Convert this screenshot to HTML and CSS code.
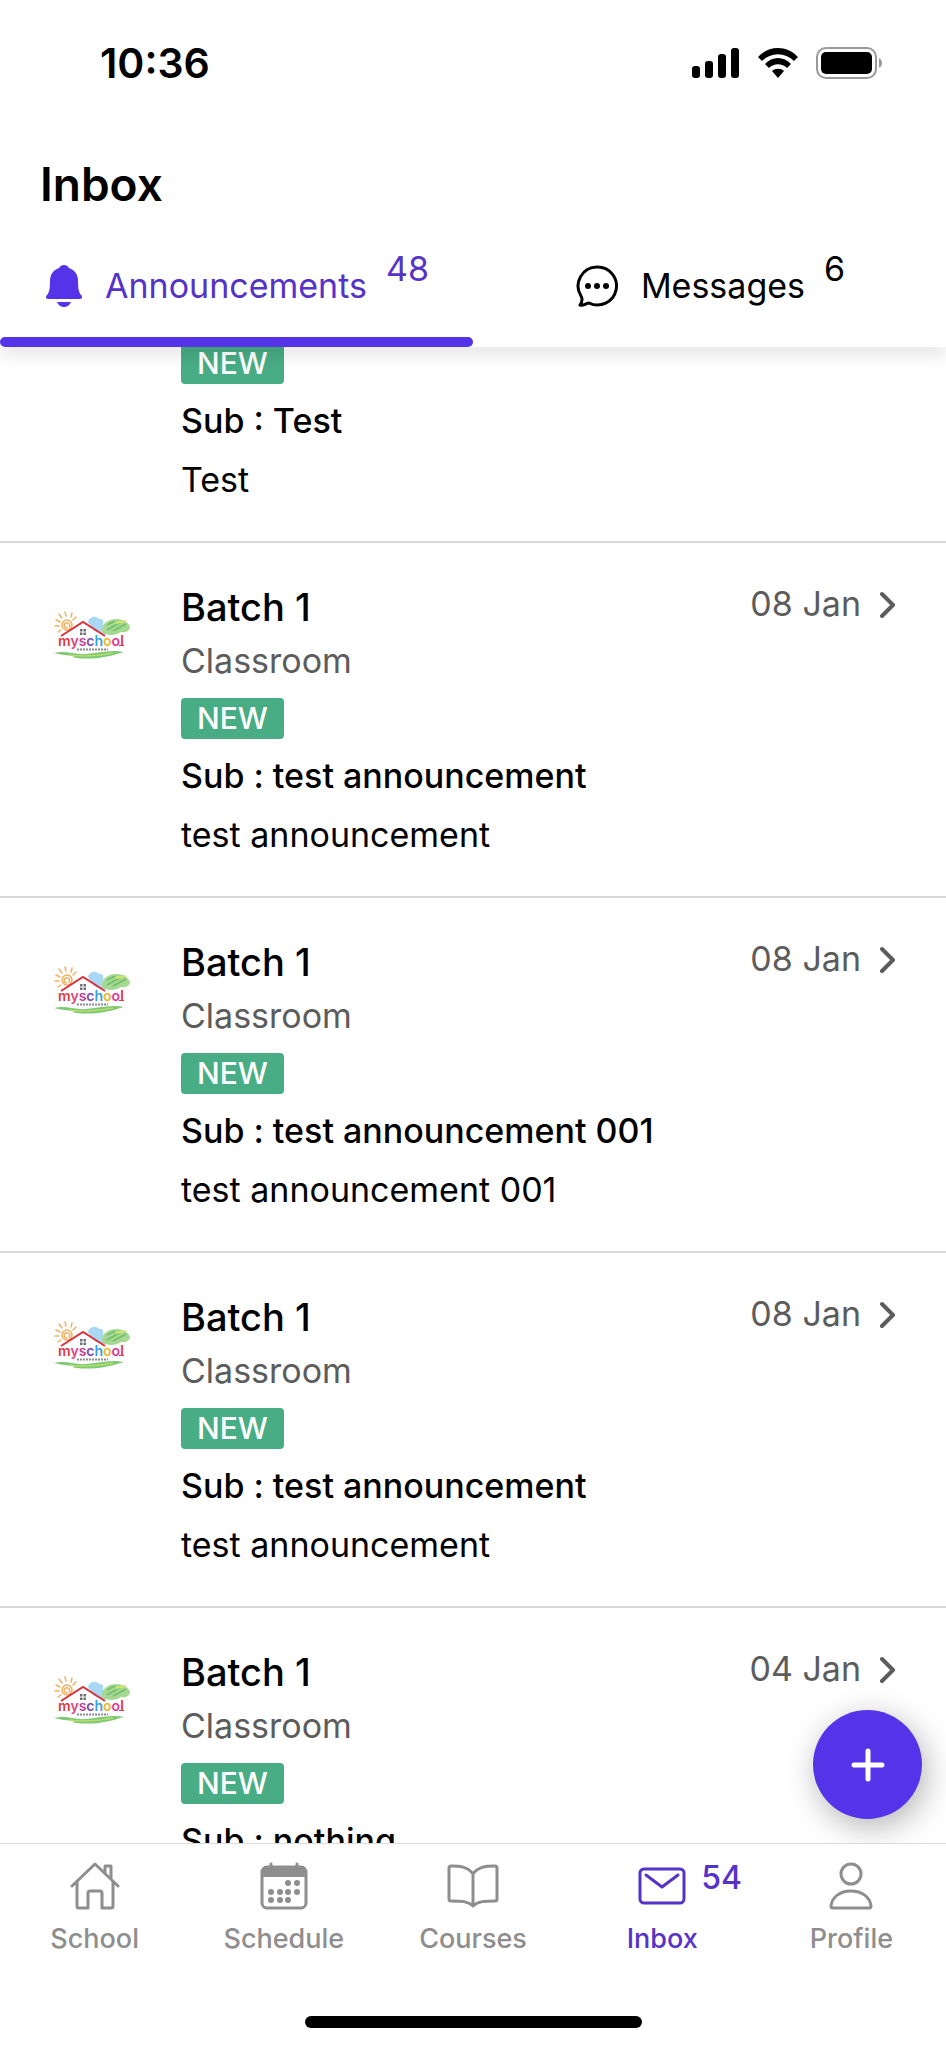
FILE: index.html
```html
<!DOCTYPE html>
<html lang="en">
<head>
    <meta charset="UTF-8">
    <meta name="viewport" content="width=device-width, initial-scale=1.0">
    <title>Inbox</title>
    <link rel="stylesheet" href="styles.css">
</head>
<body>

    <!-- shared drawings -->
    <svg class="defs" aria-hidden="true">
        <symbol id="logo" viewBox="0 0 80 52">
            <g fill="none" stroke="#f2b062" stroke-width="1.5" stroke-linecap="round">
                <circle cx="14" cy="14" r="5"/>
                <path d="M14 17c-3 0-4-4-1-5s5 3 3 4M6 3l3 4M12 1l1 4M19 2l-1 4M3 9l4 2M2 15h4M5 21l3-2M23 6l-3 3"/>
            </g>
            <path d="M35 11c1-5 8-7 11-3 4-1 5 3 4 7l3 9-12-4z" fill="#a9d8f5"/>
            <path d="M49 18c1-7 8-10 15-10 6 0 12 4 13 8 0 4-5 6-9 5-4 3-11 4-15 2-3 0-4-2-4-5z" fill="#a5d992"/>
            <path d="M54 19l14-8M60 20l13-7M54 14l8-4" stroke="#6fbe6c" stroke-width="1.5" fill="none"/>
            <path d="M63 12l10-2" stroke="#d5e56c" stroke-width="2"/>
            <path d="M8 25L30 11l22 14" fill="none" stroke="#d9333c" stroke-width="2"/>
            <path d="M27 18h6v6h-6z" fill="#6d7076"/>
            <path d="M30 18v6M27 21h6" stroke="#fff" stroke-width="1"/>
            <text x="5" y="35" class="logo-text"><tspan fill="#e03a3e">m</tspan><tspan fill="#e5447c">y</tspan><tspan fill="#c23a9a">s</tspan><tspan fill="#7c4bb0">c</tspan><tspan fill="#2fa4dc">h</tspan><tspan fill="#f5b32c">o</tspan><tspan fill="#e0389a">o</tspan><tspan fill="#e03a3e">l</tspan></text>
            <path d="M66 34.500h5" stroke="#e03a3e" stroke-width="1"/>
            <path d="M24 38.500h31" stroke="#8a8c90" stroke-width="2" stroke-dasharray="2 1"/>
            <path d="M1 42c12-3 20 2 32 1s26-5 38-2c-8 2-12 4-20 5-10 2-24 2-32 0 3-1 4-1 5-2-8 1-15 0-23-2z" fill="#7cc874"/>
            <path d="M16 44c14 2 28 1 44-2" stroke="#b9dd6b" stroke-width="1.500" fill="none"/>
        </symbol>
        <symbol id="chevron" viewBox="0 0 16 28">
            <path d="M2 3l11 11L2 25" fill="none" stroke="currentColor" stroke-width="4" stroke-linecap="round" stroke-linejoin="round"/>
        </symbol>
    </svg>

    <header class="header">
        <div class="status-bar">
            <span class="time">10:36</span>
            <div class="status-icons">
                <svg width="48" height="30" viewBox="0 0 48 30">
                    <rect x="0" y="18" width="8" height="12" rx="3"/>
                    <rect x="13" y="13" width="8" height="17" rx="3"/>
                    <rect x="26" y="6" width="8" height="24" rx="3"/>
                    <rect x="39" y="0" width="8" height="30" rx="3"/>
                </svg>
                <svg width="40" height="30" viewBox="0 0 40 30">
                    <path d="M0 9C11-3 29-3 40 9l-4 4C27 4 13 4 4 13z"/>
                    <path d="M7 16c7-8 19-8 26 0l-4 4c-5-5-13-5-18 0z"/>
                    <path d="M14 23c3-3 9-3 12 0l-6 7z"/>
                </svg>
                <svg width="68" height="32" viewBox="0 0 68 32">
                    <rect x="1" y="1" width="59" height="30" rx="9" fill="none" stroke="#999" stroke-width="2"/>
                    <rect x="5" y="5" width="51" height="22" rx="5"/>
                    <path d="M63 11c4 2 4 8 0 10z" fill="#999"/>
                </svg>
            </div>
        </div>

        <h1>Inbox</h1>

        <nav class="tabs">
            <a class="tab active" href="#announcements">
                <svg width="36" height="42" viewBox="0 0 36 42">
                    <path fill="currentColor" d="M18 0c2 0 4 1 5 3 6 2 9 7 9 13 0 8 1 12 3 14 1 1 1 1 1 2 0 1-1 2-2 2H2c-1 0-2-1-2-2s0-1 1-2c2-2 3-6 3-14 0-6 3-11 9-13 1-2 3-3 5-3zM11 37h14c-1 3-4 5-7 5s-6-2-7-5z"/>
                </svg>
                <span class="tab-label">Announcements</span>
                <span class="tab-count">48</span>
            </a>
            <a class="tab" href="#messages">
                <svg width="42" height="42" viewBox="0 0 42 42">
                    <path fill="none" stroke="currentColor" stroke-width="3" stroke-linejoin="round" d="M21 2a19 19 0 1 1-8 36c-3 0-5 3-9 2 2-3 3-6 1-9A19 19 0 0 1 21 2z"/>
                    <circle cx="12" cy="21" r="3" fill="currentColor"/>
                    <circle cx="21" cy="21" r="3" fill="currentColor"/>
                    <circle cx="30" cy="21" r="3" fill="currentColor"/>
                </svg>
                <span class="tab-label">Messages</span>
                <span class="tab-count">6</span>
            </a>
        </nav>
    </header>

    <main class="list" id="announcements">
        <article class="item continued">
            <div class="content">
                <span class="badge">NEW</span>
                <p class="subject">Sub : Test</p>
                <p class="message">Test</p>
            </div>
        </article>
        <article class="item">
            <svg class="logo"><use href="#logo"/></svg>
            <div class="content">
                <h2>Batch 1</h2>
                <p class="group">Classroom</p>
                <span class="badge">NEW</span>
                <p class="subject">Sub : test announcement</p>
                <p class="message">test announcement</p>
            </div>
            <a class="date" href="#">08 Jan <svg class="chevron"><use href="#chevron"/></svg></a>
        </article>
        <article class="item">
            <svg class="logo"><use href="#logo"/></svg>
            <div class="content">
                <h2>Batch 1</h2>
                <p class="group">Classroom</p>
                <span class="badge">NEW</span>
                <p class="subject">Sub : test announcement 001</p>
                <p class="message">test announcement 001</p>
            </div>
            <a class="date" href="#">08 Jan <svg class="chevron"><use href="#chevron"/></svg></a>
        </article>
        <article class="item">
            <svg class="logo"><use href="#logo"/></svg>
            <div class="content">
                <h2>Batch 1</h2>
                <p class="group">Classroom</p>
                <span class="badge">NEW</span>
                <p class="subject">Sub : test announcement</p>
                <p class="message">test announcement</p>
            </div>
            <a class="date" href="#">08 Jan <svg class="chevron"><use href="#chevron"/></svg></a>
        </article>
        <article class="item">
            <svg class="logo"><use href="#logo"/></svg>
            <div class="content">
                <h2>Batch 1</h2>
                <p class="group">Classroom</p>
                <span class="badge">NEW</span>
                <p class="subject">Sub : nothing</p>
            </div>
            <a class="date" href="#">04 Jan <svg class="chevron"><use href="#chevron"/></svg></a>
        </article>
    </main>

    <footer class="footer">
        <button class="add" type="button" aria-label="New announcement">
            <svg width="34" height="34" viewBox="0 0 34 34">
                <path d="M17 3v28M3 17h28" stroke="#fff" stroke-width="5" stroke-linecap="round"/>
            </svg>
        </button>
        <nav class="bottom-nav">
            <a href="#school">
                <svg width="50" height="48" viewBox="0 0 50 48">
                    <path d="M2 24L25 2l23 22M7 20v24q0 2 2 2h9V31q0-2 2-2h10q2 0 2 2v15h9q2 0 2-2V20M35 11V4h6v13"/>
                </svg>
                <span>School</span>
            </a>
            <a href="#schedule">
                <svg width="48" height="48" viewBox="0 0 48 48">
                    <rect x="2" y="5" width="44" height="41" rx="5"/>
                    <path d="M11 2v5M37 2v5"/>
                    <path class="solid" d="M2 15V9q0-5 5-5h34q5 0 5 5v6z"/>
                    <g class="solid">
                        <circle cx="28" cy="21" r="3"/><circle cx="37" cy="21" r="3"/>
                        <circle cx="11" cy="30" r="3"/><circle cx="20" cy="30" r="3"/><circle cx="28" cy="30" r="3"/><circle cx="37" cy="30" r="3"/>
                        <circle cx="11" cy="38" r="3"/><circle cx="20" cy="38" r="3"/><circle cx="28" cy="38" r="3"/>
                    </g>
                </svg>
                <span>Schedule</span>
            </a>
            <a href="#courses">
                <svg width="52" height="48" viewBox="0 0 52 48">
                    <path d="M26 12C21 5 14 4 4 4q-2 0-2 2v31q0 2 2 2c10 0 17 0 22 5 5-5 12-5 22-5q2 0 2-2V6q0-2-2-2C38 4 31 5 26 12zv32"/>
                </svg>
                <span>Courses</span>
            </a>
            <a class="active" href="#inbox">
                <svg width="48" height="48" viewBox="0 0 48 48">
                    <rect x="2" y="7" width="44" height="34" rx="4"/>
                    <path d="M8 13l16 12 16-12"/>
                </svg>
                <span>Inbox</span>
                <span class="nav-count">54</span>
            </a>
            <a href="#profile">
                <svg width="46" height="48" viewBox="0 0 46 48">
                    <ellipse cx="23" cy="12" rx="10" ry="10"/>
                    <path d="M23 29c11 0 19 6 20 15q0 2-2 2H5q-2 0-2-2c1-9 9-15 20-15z"/>
                </svg>
                <span>Profile</span>
            </a>
        </nav>
        <div class="home-bar"></div>
    </footer>

    <script>
        // the list opens just past the top of the first item
        document.getElementById('announcements').scrollTop = 13;
    </script>

</body>
</html>
```
FILE: styles.css
```css
* {
    box-sizing: border-box;
}
body {
    font-family: Inter, "Liberation Sans", sans-serif;
    font-size: 34px;
    color: #000;
    background-color: #fff;
    margin: 0;
    height: 100vh;
    display: flex;
    flex-direction: column;
}
h1, h2, p {
    margin: 0;
}
a {
    color: inherit;
    text-decoration: none;
}
svg {
    display: block;
    flex-shrink: 0;
}
.defs {
    display: none;
}

/* Header */
.header {
    position: relative;
    z-index: 1;
    background-color: #fff;
    box-shadow: 0 10px 16px rgba(0, 0, 0, 0.09);
}
.status-bar {
    display: flex;
    justify-content: space-between;
    align-items: center;
    height: 126px;
    padding: 0 62px 0 100px;
}
.time {
    font-size: 41px;
    font-weight: 600;
}
.status-icons {
    display: flex;
    align-items: center;
    gap: 18px;
}
h1 {
    font-size: 46px;
    font-weight: 600;
    line-height: 60px;
    padding: 28px 40px 26px;
}
.tabs {
    display: flex;
    height: 107px;
}
.tab {
    flex: 1;
    display: flex;
    justify-content: center;
    padding: 25px 0 0 2px;
    position: relative;
}
.tab-label {
    line-height: 42px;
    margin: 0 19px 0 23px;
}
.tab-count {
    line-height: 8px;
}
.tab.active {
    color: #5533c9;
}
.tab.active::after {
    content: "";
    position: absolute;
    left: 0;
    right: 0;
    bottom: 0;
    height: 10px;
    border-radius: 5px;
    background-color: #5533e8;
}
.tab.active svg {
    color: #5533e8;
}

/* List */
.list {
    flex: 1;
    min-height: 0;
    overflow-y: auto;
    scrollbar-width: none;
}
.item {
    display: flex;
    padding: 38px 50px 32px 53px;
    border-bottom: 2px solid #d9d9d9;
}
.item.continued {
    padding: 0 50px 32px 181px;
}
.logo {
    width: 80px;
    height: 52px;
    margin: 30px 48px 0 0;
}
.logo-text {
    font-family: Inter, sans-serif;
    font-size: 14px;
    font-weight: 600;
}
.content {
    flex: 1;
}
h2 {
    font-size: 38px;
    font-weight: 500;
    line-height: 52px;
}
.group {
    color: #5c5c5c;
    line-height: 56px;
}
.badge {
    display: block;
    width: fit-content;
    margin: 9px 0 7px;
    padding: 0 16px;
    border-radius: 4px;
    background-color: #48ad85;
    color: #fff;
    font-size: 30px;
    font-weight: 500;
    line-height: 41px;
}
.subject {
    font-weight: 500;
    line-height: 60px;
}
.message {
    line-height: 58px;
}
.date {
    display: flex;
    align-items: center;
    gap: 19px;
    height: 44px;
    color: #5c5c5c;
}
.chevron {
    width: 16px;
    height: 28px;
    margin-top: 4px;
}

/* Footer */
.footer {
    position: relative;
    border-top: 1px solid #ddd;
    background-color: #fff;
}
.add {
    position: absolute;
    right: 24px;
    bottom: 100%;
    display: flex;
    align-items: center;
    justify-content: center;
    width: 109px;
    height: 109px;
    margin-bottom: 25px;
    padding: 0;
    border: none;
    border-radius: 50%;
    background-color: #5533e8;
    box-shadow: 4px 8px 32px rgba(0, 0, 0, 0.3);
    cursor: pointer;
}
.bottom-nav {
    position: relative;
    display: flex;
    padding-top: 18px;
    background-color: #fff;
    color: #8e8e8e;
}
.bottom-nav a {
    position: relative;
    flex: 1;
    display: flex;
    flex-direction: column;
    align-items: center;
    gap: 7px;
    font-size: 27px;
    font-weight: 500;
    line-height: 44px;
}
.bottom-nav svg {
    fill: none;
    stroke: currentColor;
    stroke-width: 3;
    stroke-linecap: round;
    stroke-linejoin: round;
}
.bottom-nav .solid {
    fill: currentColor;
    stroke: none;
}
.bottom-nav .active {
    color: #5533c9;
}
/* unread count beside the icon */
.nav-count {
    position: absolute;
    left: calc(50% + 39px);
    top: -6px;
    font-size: 32px;
}
.home-bar {
    width: 337px;
    height: 12px;
    margin: 55px auto 20px;
    border-radius: 6px;
    background-color: #000;
}
```
